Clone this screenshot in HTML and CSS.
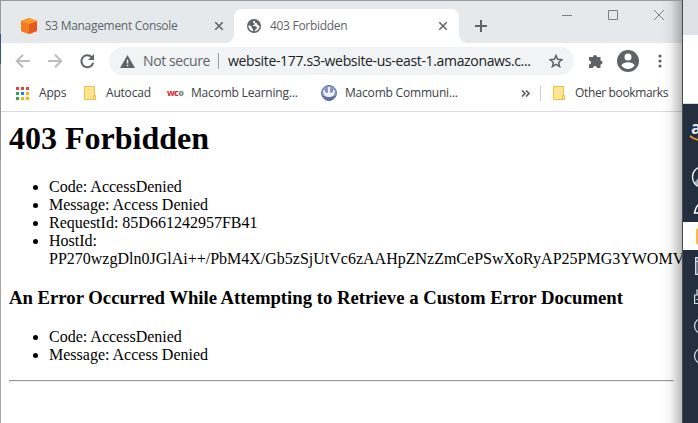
FILE: index.html
```html
<!DOCTYPE html>
<html lang="en">
<head>
<meta charset="utf-8">
<title>403 Forbidden</title>
<link rel="stylesheet" href="styles.css">
</head>
<body>
<div class="desktop">
  <div class="edge"></div>
  <section class="window">
    <header class="tabs">
      <div class="tab tab-idle">
        <svg class="favicon" width="16" height="16" viewBox="0 0 16 16"><path d="M0 3 8 0l8 3v10l-8 3-8-3z" fill="#f58220"/><path d="m0 3 8 3v10l-8-3z" fill="#f47b1f"/><path d="m16 3-8 3v10l8-3z" fill="#e65a1e"/><path d="m0 3 8-3 8 3-8 3z" fill="#fb9a2c"/></svg>
        <span class="tab-title t-s3">S3 Management Console</span>
        <svg class="close" width="10" height="10" viewBox="0 0 10 10"><path d="m1.3 1.3 7.4 7.4m0-7.4L1.3 8.7"/></svg>
      </div>
      <div class="tab tab-active">
        <svg class="favicon" width="14" height="14" viewBox="0 0 14 14"><circle cx="7" cy="7" r="7" fill="#5f6368"/><path d="M7.6 1.5c-1 .6-1.8 1-1.6 2 .2 1 2 .5 1.8 1.7-.3 1-1.8.5-2 1.600 .2 1 2.500.200 3.600 1 .9.7.8 1.700-.3 2.200-1 .5-.8 1.200-1.700 2.300 2.900-.1 5.100-2.400 5.100-5.300-.5-.7-1.300-.5-2-1-.5-.5.200-1.200-.5-1.600-.8-.4-1.500-.1-2-.8-.4-.8.100-1.600-.4-2.100z" fill="#fff"/><path d="M1.500 6.300c1 .2 2.300.3 2.900 1.300.5 1 .1 1.600 1.100 2.100.8.5.6 1.500.5 2.600-2.600-.5-4.900-3-4.500-6z" fill="#fff"/></svg>
        <span class="tab-title t-403">403 Forbidden</span>
        <svg class="close" width="10" height="10" viewBox="0 0 10 10"><path d="m1.300 1.300 7.400 7.400m0-7.400L1.300 8.700"/></svg>
      </div>
      <svg class="plus" width="12" height="12" viewBox="0 0 12 12"><path d="M6 0v12M0 6h12"/></svg>
      <svg class="controls" width="104" height="12" viewBox="0 0 104 12"><path d="M1 6.500h10M47.500 1.500h9v9h-9zM93 1l10 10m0-10L93 11"/></svg>
    </header>
    <div class="toolbar">
      <svg class="nav" width="82" height="16" viewBox="0 0 82 16"><path class="dim" d="M15 8H2m6-6.300L1.700 8 8 14.300M33 8h13M40 1.700 46.300 8 40 14.300"/><path class="reload" d="M76.700 4.100A6 6 0 1 0 78.200 9.700"/><path d="M79 1v6h-6z" fill="#5f6368"/></svg>
      <div class="omnibox">
        <svg class="warn" width="15" height="13" viewBox="0 0 15 13"><path d="M7.500 0 15 13H0z" fill="#5f6368"/><path d="M6.800 4.800h1.500v3.700H6.800zm0 4.900h1.500v1.500H6.800z" fill="#f1f3f4"/></svg>
        <span class="insecure">Not secure</span>
        <i class="divider"></i>
        <span class="url">website-177.s3-website-us-east-1.amazonaws.c...</span>
        <svg class="star" width="14" height="14" viewBox="0 0 14 14"><path d="m7 1.500 1.600 3.800 4.200.4-3.200 2.700 1 4.100L7 10.300l-3.600 2.200 1-4.100L1.200 5.700l4.200-.4z"/></svg>
      </div>
      <svg class="puzzle" width="15" height="15" viewBox="0 0 15 15"><path d="M1.500 3H5a2 2 0 1 1 4 0h3.500v3.600a2 2 0 1 1 0 4V14H9a2 2 0 0 0-4 0H1v-3.500a2 2 0 0 0 0-4V3z" fill="#5f6368"/></svg>
      <svg class="avatar" width="22" height="22" viewBox="0 0 22 22"><circle cx="11" cy="11" r="11" fill="#5f6368"/><circle cx="11" cy="6.900" r="3.500" fill="#fff"/><path d="M4.400 15.500c.8-2.200 4-3.200 6.600-3.200s5.800 1 6.600 3.200c-1.500 2.100-3.900 3.400-6.600 3.400s-5.100-1.300-6.600-3.400z" fill="#fff"/></svg>
      <svg class="more" width="4" height="14" viewBox="0 0 4 14"><g fill="#5f6368"><circle cx="2" cy="2" r="1.600"/><circle cx="2" cy="7" r="1.600"/><circle cx="2" cy="12" r="1.600"/></g></svg>
    </div>
    <nav class="bookmarks">
      <svg class="apps" width="13" height="13" viewBox="0 0 13 13"><path d="M0 0h3v3H0zm5 0h3v3H5zm5 0h3v3h-3z" fill="#ea4335"/><path d="M0 5h3v3H0zm0 5h3v3H0z" fill="#34a05a"/><path d="M5 5h3v3H5z" fill="#1a7ff0"/><path d="M10 5h3v3h-3zm0 5h3v3h-3zm-5 0h3v3H5z" fill="#f9b208"/></svg>
      <span class="b-apps">Apps</span>
      <svg class="folder" width="12" height="14" viewBox="0 0 12 14"><path d="M.5.500h10v9h1v4H.5z" fill="#ffe591" stroke="#e9c246"/><path d="M9.500 13V9.500h2" fill="none" stroke="#e9c246"/></svg>
      <span class="b-cad">Autocad</span>
      <span class="wco">wc<b>o</b></span>
      <span class="b-learn">Macomb Learning...</span>
      <svg class="seal" width="16" height="16" viewBox="0 0 16 16"><circle cx="8" cy="8" r="7.500" fill="#8d9bc6" stroke="#6272a6"/><path d="M7 2h2v6l2-1 1-4 2 3-1 4-3 2H6l-3-2-1-4 2-3 1 4 2 1z" fill="#eef1f8"/><path d="m3.500 3.500 2 4M12.500 3.500l-2 4" stroke="#5367a4"/><path d="M1.500 10.500Q8 14 14.500 10.500 12 15.500 8 15.500t-6.500-5z" fill="#5e70aa"/></svg>
      <span class="b-comm">Macomb Communi...</span>
      <svg class="chevrons" width="9" height="7" viewBox="0 0 9 7"><path d="m1 .5 3 3-3 3m4-6 3 3-3 3"/></svg>
      <i class="bar-divider"></i>
      <svg class="folder-other" width="12" height="14" viewBox="0 0 12 14"><path d="M.5.500h10v9h1v4H.5z" fill="#ffe591" stroke="#e9c246"/><path d="M9.500 13V9.500h2" fill="none" stroke="#e9c246"/></svg>
      <span class="b-other">Other bookmarks</span>
    </nav>
    <main class="page">
      <h1>403 Forbidden</h1>
      <ul>
        <li>Code: AccessDenied</li>
        <li>Message: Access Denied</li>
        <li>RequestId: 85D661242957FB41</li>
        <li>HostId: PP270wzgDln0JGlAi++/PbM4X/Gb5zSjUtVc6zAAHpZNzZmCePSwXoRyAP25PMG3YWOMV</li>
      </ul>
      <h3>An Error Occurred While Attempting to Retrieve a Custom Error Document</h3>
      <ul>
        <li>Code: AccessDenied</li>
        <li>Message: Access Denied</li>
      </ul>
      <hr>
    </main>
    <div class="shade"></div>
  </section>
  <aside class="behind">
    <div class="b-tabs"></div>
    <div class="b-tools"></div>
    <div class="b-nav">
      <span class="aws">a</span>
      <svg width="15" height="118" viewBox="0 0 15 118" fill="none"><path d="M7 32q4 3.500 9 4" stroke="#f39a20" stroke-width="1.700"/><path d="m11 79 5-6v9z" fill="#a4a9b0"/><circle cx="20" cy="73" r="10.500" stroke="#eef0f2" stroke-width="1.300"/><path d="M16 100.500c-3 1-3.500 5-4.500 8.500H16" stroke="#fff" stroke-width="1.500"/></svg>
    </div>
    <div class="b-current"><svg width="15" height="28" viewBox="0 0 15 28"><rect x="14" y="7" width="8" height="15" rx="1.500" fill="#ffd590" stroke="#f8a51b" stroke-width="1.500"/></svg></div>
    <div class="b-nav-low"><svg width="15" height="173" viewBox="0 0 15 173" fill="none" stroke="#d9dce0" stroke-width="1.200"><path d="M16 7.600h-3.400v16.800H16" fill="#68717d"/><path d="M12.600 11.500H16M16 40h-2v5m2 0h-4.400v8.500H16M13.500 49.500h2.500" /><circle cx="19" cy="76" r="7.500"/><circle cx="19" cy="106" r="7.500"/></svg></div>
  </aside>
</div>
</body>
</html>
```
FILE: styles.css
```css
* { box-sizing: border-box; }
body { margin: 0; overflow: hidden; background: #fff; }
svg, i { flex: none; display: block; }
.desktop { display: flex; width: 698px; height: 423px; }
.edge { width: 1px; background: linear-gradient(#999a9e 34px, #3a5387 34px, #3a5387 64px, #929295 64px, #929295 160px, #a6a6a8 160px); }
.window { position: relative; width: 681px; height: 423px; overflow: hidden; background: #fff; border-top: 1px solid #999a9e; font: 12px/16px "Open Sans", "Noto Sans", sans-serif; letter-spacing: -0.3px; color: #3c4043; white-space: nowrap; }

.tabs { display: flex; height: 42px; background: #e6e9ec; color: #5f6368; }
.tab { display: flex; align-items: center; height: 34px; margin-top: 8px; position: relative; }
.tab-idle { width: 233px; padding-left: 20px; }
.tab-active { width: 225px; padding-left: 13px; background: #fff; border-radius: 8px 8px 0 0; }
.tab-active::before, .tab-active::after { content: ""; position: absolute; bottom: 0; width: 8px; height: 8px; }
.tab-active::before { left: -8px; background: radial-gradient(circle at 0 0, transparent 7.5px, #fff 8px); }
.tab-active::after { right: -8px; background: radial-gradient(circle at 100% 0, transparent 7.5px, #fff 8px); }
.tab-title { margin-left: 8px; }
.t-403 { margin-left: 9px; }
.close { margin-left: auto; margin-right: 11px; fill: none; stroke: #5f6368; stroke-width: 1.6; }
.tab-idle .close { margin-right: 10px; }
.plus { margin: 19px 0 0 16px; stroke: #5f6368; stroke-width: 2; }
.controls { margin: 8px 17px 0 auto; fill: none; stroke: #7c7f82; }

.toolbar { display: flex; align-items: center; height: 36px; }
.nav { margin-left: 14px; fill: none; stroke-width: 2; }
.dim { stroke: #babcbe; }
.reload { stroke: #5f6368; }
.nav path:last-child { stroke: none; }
.omnibox { display: flex; align-items: center; width: 465px; height: 28px; margin-left: 12px; padding-left: 11px; border-radius: 14px; background: #f1f3f4; font-size: 14px; line-height: 20px; }
.insecure { width: 67px; margin-left: 8px; letter-spacing: -0.4px; color: #5f6368; }
.divider { width: 1px; height: 16px; margin-left: 8px; background: #9aa0a6; }
.url { margin-left: 9px; letter-spacing: -0.34px; color: #202124; }
.star { margin-left: auto; margin-right: 11px; fill: none; stroke: #5f6368; stroke-width: 1.5; }
.puzzle { margin-left: 14px; }
.avatar { margin-left: 14px; }
.more { margin-left: 19px; }

.bookmarks { display: flex; align-items: center; height: 33px; padding-bottom: 4px; border-bottom: 1px solid #d9dbde; letter-spacing: -0.2px; }
.apps { margin-left: 15px; }
.bookmarks span { flex: none; }
.b-apps { width: 27px; margin-left: 10px; }
.folder { margin-left: 18px; }
.b-cad { width: 45px; margin-left: 10px; }
.bookmarks .wco { width: 17px; margin-left: 16px; color: #cf2334; font: bold 9px/12px "Open Sans", sans-serif; letter-spacing: -0.6px; }
.wco b { color: #888; }
.b-learn { width: 105px; margin-left: 7px; }
.seal { margin-left: 25px; }
.b-comm { width: 111px; margin-left: 8px; }
.chevrons { margin-left: auto; fill: none; stroke: #5f6368; stroke-width: 1.7; }
.bar-divider { width: 1px; height: 16px; margin-left: 10px; background: #ced1d4; }
.folder-other { margin-left: 12px; }
.b-other { width: 93px; margin: 0 14px 0 10px; letter-spacing: -0.36px; }

.page { padding: 8px 8px 0; color: #000; font: 16px/18px "Liberation Serif", serif; letter-spacing: 0; white-space: normal; }
h1 { margin: 0 0 21px; font-size: 32px; line-height: 37px; }
h3 { margin: 19px 0 20px; font-size: 18.72px; line-height: 21px; }
ul { margin: 0; padding-left: 40px; }
hr { margin: 16px 0 0; }
.shade { position: absolute; top: 0; right: 0; width: 20px; height: 423px; background: linear-gradient(to right, transparent, rgba(0,0,0,.05) 45%, rgba(0,0,0,.27)); }

.behind { width: 16px; border-left: 1px solid #4a4b4d; background: #232f3e; overflow: hidden; }
.b-tabs { height: 35px; background: #dee1e6; }
.b-tools { height: 69px; background: #fff; border-bottom: 1px solid #d5dbdb; }
.b-nav { position: relative; height: 118px; }
.aws { position: absolute; left: 8px; top: 14px; color: #e4e6e8; font: bold 17px/20px "Open Sans", sans-serif; }
.b-current { height: 28px; background: #fff; }
```
